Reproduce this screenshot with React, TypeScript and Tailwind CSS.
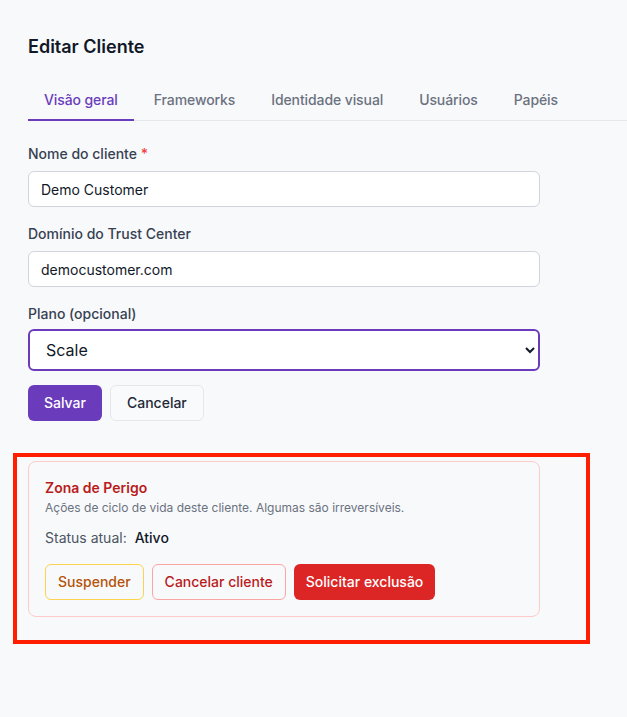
import React, { useState } from "react";

const tabs = ["Visão geral", "Frameworks", "Identidade visual", "Usuários", "Papéis"];

const App: React.FC = () => {
  let [active, setActive] = useState(0);
  let [name, setName] = useState("Demo Customer");
  let [domain, setDomain] = useState("democustomer.com");
  let [plan, setPlan] = useState("Scale");

  return (
    <div className="min-h-screen bg-[#f8f9fb] pl-7 pt-[33px] pb-10 font-['Inter',_'Liberation_Sans',_sans-serif]">
      <h1 className="text-lg leading-7 font-semibold text-[#111827]">Editar Cliente</h1>

      <div className="mt-[19px] flex gap-1 border-b border-[#e5e7eb]">
        {tabs.map((t, i) => (
          <button
            key={t}
            onClick={() => setActive(i)}
            className={
              i === active
                ? "-mb-px border-b-2 border-[#6a3cbb] px-4 pt-2.5 pb-[9px] text-sm leading-5 font-medium tracking-[-0.1px] text-[#6a3cbb]"
                : "-mb-px border-b-2 border-transparent px-4 pt-2.5 pb-[9px] text-sm leading-5 font-medium tracking-[-0.1px] text-[#6b7280]"
            }
          >
            {t}
          </button>
        ))}
      </div>

      <form className="mt-[23px] w-[512px]">
        <div className="flex flex-col gap-[17px]">
          <div>
            <label className="mb-[7px] block text-sm leading-5 font-medium text-[#374151]">
              Nome do cliente <span className="text-[#ef4444]">*</span>
            </label>
            <input
              value={name}
              onChange={(e) => setName(e.target.value)}
              className="h-9 w-full rounded-md border border-[#d1d5db] bg-white px-3 text-sm text-[#111827] focus:outline-none"
            />
          </div>
          <div>
            <label className="mb-[7px] block text-sm leading-5 font-medium text-[#374151]">
              Domínio do Trust Center
            </label>
            <input
              value={domain}
              onChange={(e) => setDomain(e.target.value)}
              className="h-9 w-full rounded-md border border-[#d1d5db] bg-white px-3 text-sm text-[#111827] focus:outline-none"
            />
          </div>
          <div>
            <label className="mb-[5px] block text-sm leading-5 font-medium text-[#374151]">
              Plano (opcional)
            </label>
            <select
              value={plan}
              onChange={(e) => setPlan(e.target.value)}
              className="h-[42px] w-full rounded-md border-2 border-[#6a3cbb] bg-white px-3 text-base text-[#111827] outline-none"
            >
              <option value="">Nenhum</option>
              <option value="Starter">Starter</option>
              <option value="Growth">Growth</option>
              <option value="Scale">Scale</option>
            </select>
          </div>
        </div>

        <div className="mt-3.5 flex gap-2">
          <button
            type="button"
            className="h-9 rounded-md bg-[#6a3cbb] px-4 text-sm font-medium text-white"
          >
            Salvar
          </button>
          <button
            type="button"
            className="h-9 rounded-md border border-[#e5e7eb] bg-[#f9fafb] px-4 text-sm font-medium text-[#1f2937]"
          >
            Cancelar
          </button>
        </div>
      </form>

      <div className="relative mt-10 w-[512px]">
        <div className="pointer-events-none absolute -top-2 -right-[50px] -bottom-[27px] -left-[15px] border-4 border-[#ff1f00]"></div>
        <div className="rounded-lg border border-[#fecaca] bg-[#f8f9fb] p-4">
          <h2 className="text-sm leading-5 font-semibold text-[#b91c1c]">Zona de Perigo</h2>
          <p className="text-xs leading-5 text-[#6b7280]">
            Ações de ciclo de vida deste cliente. Algumas são irreversíveis.
          </p>
          <div className="mt-2.5 flex gap-2 text-sm leading-5">
            <span className="text-[#4b5563]">Status atual:</span>
            <span className="font-medium text-[#111827]">Ativo</span>
          </div>
          <div className="mt-4 flex gap-2">
            <button className="h-9 rounded-md border border-[#fcd34d] px-3 text-sm font-medium text-[#b45309]">
              Suspender
            </button>
            <button className="h-9 rounded-md border border-[#fca5a5] px-3 text-sm font-medium text-[#b91c1c]">
              Cancelar cliente
            </button>
            <button className="h-9 rounded-md bg-[#dc2626] px-3 text-sm font-medium text-white">
              Solicitar exclusão
            </button>
          </div>
        </div>
      </div>
    </div>
  );
};

export default App;
